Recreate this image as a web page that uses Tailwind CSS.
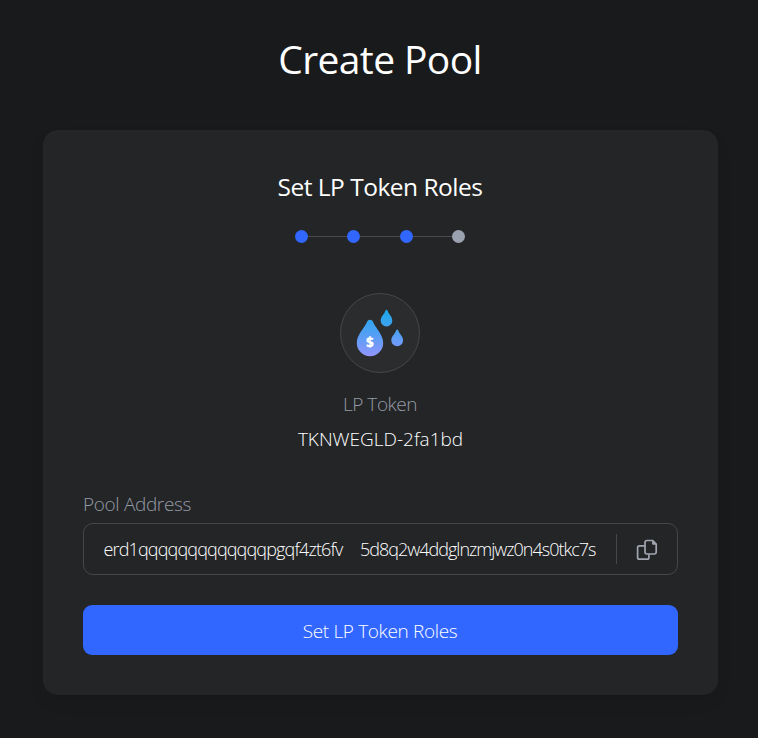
<!DOCTYPE html>
<html lang="en">
<head>
<meta charset="utf-8">
<title>Create Pool</title>
<script src="https://cdn.jsdelivr.net/npm/@tailwindcss/browser@4"></script>
</head>
<body class="h-[738px] overflow-hidden bg-[#191a1c] pl-[43px] font-['Segoe_UI','Open_Sans','Noto_Sans',sans-serif] text-white">
<main class="flex w-[675px] flex-col items-center pt-[35px]">
  <h1 class="h-[95px] mr-px whitespace-nowrap text-[39px] leading-[48px] tracking-[-0.6px]"><span>Create Pool</span></h1>
  <section class="flex h-[565px] w-full flex-col items-center rounded-[15px] bg-[#242527] px-10 pt-[41px] shadow-[0_8px_16px_rgba(0,0,0,0.06)]">
    <h2 class="mr-px h-8 whitespace-nowrap text-[24.500px] leading-8 tracking-[-0.5px]"><span>Set LP Token Roles</span></h2>
    <div class="mt-[27px] mr-px flex h-[13px] items-center">
      <i class="size-[13px] rounded-full bg-[#3166ff]"></i><i class="h-px w-[39.5px] bg-[#4a4b4e]"></i>
      <i class="size-[13px] rounded-full bg-[#3166ff]"></i><i class="h-px w-[39.5px] bg-[#4a4b4e]"></i>
      <i class="size-[13px] rounded-full bg-[#3166ff]"></i><i class="h-px w-[39.5px] bg-[#4a4b4e]"></i>
      <i class="size-[13px] rounded-full bg-[#9ba2af]"></i>
    </div>
    <div class="mt-[50px] mr-px size-20 shrink-0 overflow-hidden rounded-full border border-[#46474a] bg-[#2b2c2e]">
      <svg class="-m-px block" width="80" height="80" viewBox="0 0 80 80">
        <defs>
          <linearGradient id="drop" gradientUnits="userSpaceOnUse" x1="40" y1="17" x2="40" y2="66"><stop offset="0" stop-color="#1ba8ea"/><stop offset=".5" stop-color="#539ff4"/><stop offset="1" stop-color="#9b94ff"/></linearGradient>
        </defs>
        <g fill="url(#drop)">
          <path d="M30 26.800c1.500 0 2.300.7 2.800 1.800C35.500 35.500 43.200 41.500 43.200 50a13.200 13.200 0 0 1-26.400 0C16.800 41.500 24.500 35.500 27.200 28.600c.5-1.100 1.300-1.800 2.800-1.800Z"/>
          <path d="M46.500 16.800c.5 0 .9.4 1.100 1 1 3.600 4.700 5.600 4.700 9.900a5.800 5.800 0 0 1-11.600 0c0-4.300 3.700-6.300 4.700-9.900.2-.6.600-1 1.100-1Z"/>
          <path d="M57.200 36.400c.5 0 .9.400 1.100 1 1 3.400 4.800 5.700 4.800 9.900a5.900 5.900 0 0 1-11.800 0c0-4.200 3.800-6.500 4.800-9.900.2-.6.600-1 1.100-1Z"/>
        </g>
        <text x="29.800" y="53.800" text-anchor="middle" fill="#fff" font-size="13.500" font-weight="800" font-family="Open Sans, Noto Sans, sans-serif">$</text>
      </svg>
    </div>
    <p class="mt-[17px] mr-px h-7 whitespace-nowrap text-[19px] leading-7 font-light tracking-[-0.45px] text-[#959ba6]"><span>LP Token</span></p>
    <p class="mt-[7px] h-7 whitespace-nowrap text-[19px] leading-7 font-light"><span>TKNWEGLD-2fa1bd</span></p>
    <div class="mt-[37px] h-[33px] w-full whitespace-nowrap text-[19px] leading-7 font-light tracking-[-0.35px] text-[#959ba6]"><span>Pool Address</span></div>
    <div class="flex h-[52px] w-full shrink-0 items-center rounded-[10px] border border-[#46474a] text-[18px] font-light whitespace-nowrap">
      <span class="ml-[19.5px] w-[256.5px] shrink-0 tracking-[-0.85px]"><span>erd1qqqqqqqqqqqqqpgqf4zt6fv</span></span>
      <span class="w-[256px] shrink-0 tracking-[-1px]"><span>5d8q2w4ddglnzmjwz0n4s0tkc7s</span></span>
      <i class="h-[30px] w-px shrink-0 bg-[#46474a]"></i>
      <svg class="mt-[2px] ml-[19px] shrink-0" width="22" height="22" viewBox="0 0 22 22" fill="none" stroke="#a0a5b0" stroke-width="1.700" stroke-linejoin="round"><path d="M11 1.500h5.800L20.200 5v8.200a1.800 1.800 0 0 1-1.800 1.800H10.800a1.800 1.800 0 0 1-1.800-1.800V3.300A1.800 1.800 0 0 1 10.800 1.500Z"/><path d="M16.600 2V5.200H20Z" fill="#a0a5b0" stroke-width="1"/><path d="M8.800 6.800H3.400A1.800 1.800 0 0 0 1.600 8.600v9.800a1.800 1.800 0 0 0 1.800 1.800h7.700a1.800 1.800 0 0 0 1.800-1.800V15.200"/></svg>
    </div>
    <button class="mt-[30px] h-[50px] w-full shrink-0 rounded-[9px] bg-[#3166ff] pt-[2px] pr-px text-[19px] leading-[48px] font-light tracking-[-0.35px] whitespace-nowrap"><span>Set LP Token Roles</span></button>
  </section>
</main>
</body>
</html>
